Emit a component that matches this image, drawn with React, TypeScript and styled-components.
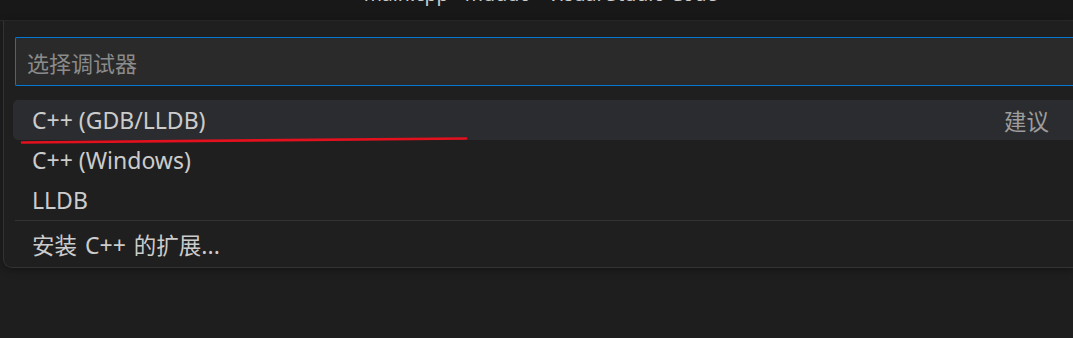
import styled, { createGlobalStyle } from "styled-components";

const GlobalStyle = createGlobalStyle`
  body {
    margin: 0;
    background-color: #1e1e1e;
    font-family: "Noto Sans", "Noto Sans CJK SC", sans-serif;
    overflow: hidden;
  }
`;

const Page = styled.div`
  width: 1073px;
  height: 338px;
  overflow: hidden;
  background-color: #1e1e1e;
`;

const TitleBar = styled.div`
  height: 20px;
  background-color: #181818;
  border-bottom: 1px solid #2b2b2b;
  display: flex;
  justify-content: center;
  overflow: hidden;
`;

const TitleText = styled.span`
  margin-top: -16px;
  margin-left: 8px;
  font-size: 19.5px;
  line-height: 20px;
  color: #cccccc;
  white-space: nowrap;
`;

const Workbench = styled.div`
  padding-left: 3px;
`;

const Picker = styled.div`
  position: relative;
  background-color: #1f1f1f;
  border: 1px solid #333333;
  border-right: none;
  border-top: none;
  border-radius: 0 0 0 9px;
  padding: 16px 0 0 11px;
  height: 247px;
  box-sizing: border-box;
  box-shadow: 0 2px 8px rgba(0, 0, 0, 0.35);
`;

const Input = styled.div`
  height: 49px;
  box-sizing: border-box;
  border: 1px solid #0078d4;
  border-right: none;
  border-radius: 2px 0 0 2px;
  background-color: #2a2a2a;
  display: flex;
  align-items: center;
  padding-left: 11px;
  font-family: "Noto Sans CJK SC", sans-serif;
  font-size: 22px;
  color: #8b8b8b;
`;

const List = styled.div`
  margin-top: 14px;
  margin-left: -2px;
  display: flex;
  flex-direction: column;
`;

const Row = styled.div<{ active?: boolean }>`
  height: 40px;
  display: flex;
  align-items: center;
  justify-content: space-between;
  padding: 0 24px 0 19px;
  border-radius: 5px 0 0 5px;
  background-color: ${(p) => (p.active ? "#2b2c2f" : "transparent")};
  color: #cccccc;
  font-size: 23px;
`;

const LastRow = styled(Row)`
  height: 47px;
  word-spacing: 2px;
`;

const Separator = styled.div`
  height: 1px;
  background-color: #333333;
  margin-left: 2px;
`;

const Cjk = styled.span`
  font-family: "Noto Sans CJK SC", sans-serif;
  font-size: 22.5px;
`;

const Hint = styled(Cjk)`
  color: #9d9d9d;
`;

const Underline = styled.svg`
  position: absolute;
  left: 17px;
  top: 116px;
  overflow: visible;
`;

export default function App() {
  return (
    <Page>
      <GlobalStyle />
      <TitleBar>
        <TitleText>main.cpp - muduo - Visual Studio Code</TitleText>
      </TitleBar>
      <Workbench>
        <Picker>
          <Input>选择调试器</Input>
          <List>
            <Row active>
              <span>C++ (GDB/LLDB)</span>
              <Hint>建议</Hint>
            </Row>
            <Row>C++ (Windows)</Row>
            <Row>LLDB</Row>
            <Separator />
            <LastRow>
              <span>
                <Cjk>安装</Cjk> C++ <Cjk>的扩展</Cjk>...
              </span>
            </LastRow>
          </List>
          <Underline width="450" height="8">
            <path
              d="M 1 5.5 Q 200 3.5 445 1.5"
              stroke="#e3101e"
              strokeWidth="2.6"
              strokeLinecap="round"
              fill="none"
            />
          </Underline>
        </Picker>
      </Workbench>
    </Page>
  );
}
